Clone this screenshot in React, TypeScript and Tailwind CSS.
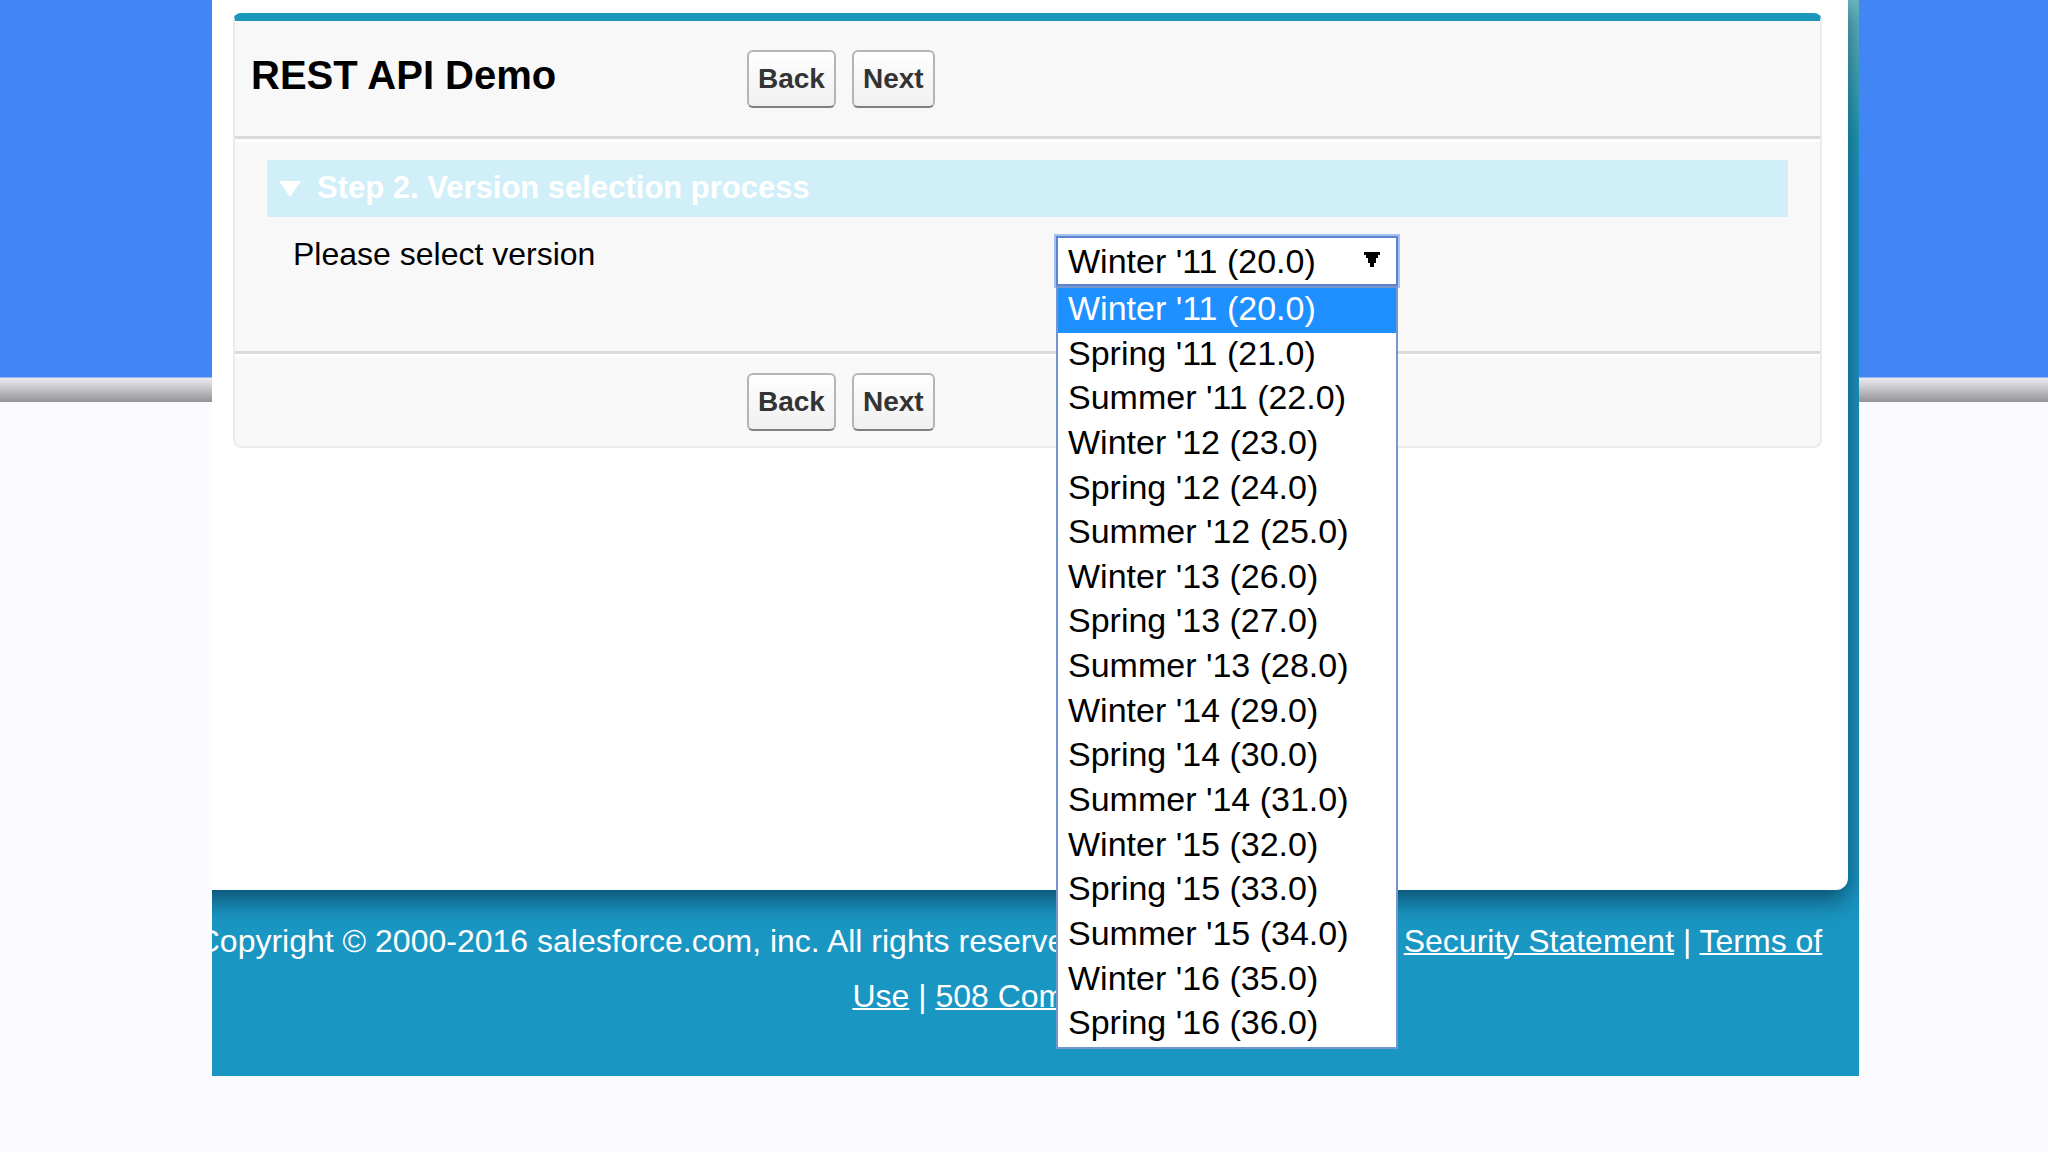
import { useState } from "react";
import clsx from "clsx";

const VERSIONS = [
  "Winter '11 (20.0)",
  "Spring '11 (21.0)",
  "Summer '11 (22.0)",
  "Winter '12 (23.0)",
  "Spring '12 (24.0)",
  "Summer '12 (25.0)",
  "Winter '13 (26.0)",
  "Spring '13 (27.0)",
  "Summer '13 (28.0)",
  "Winter '14 (29.0)",
  "Spring '14 (30.0)",
  "Summer '14 (31.0)",
  "Winter '15 (32.0)",
  "Spring '15 (33.0)",
  "Summer '15 (34.0)",
  "Winter '16 (35.0)",
  "Spring '16 (36.0)",
];

function WizardButtons() {
  const buttonClass =
    "h-[58px] rounded-md border-2 border-[#b5b5b5] border-b-[#7f7f7f] bg-linear-to-b from-white to-[#f0eff1] px-[9px] text-[28px] font-bold text-[#333]";

  return (
    <div className="flex gap-4">
      <button type="button" className={buttonClass}>
        Back
      </button>
      <button type="button" className={buttonClass}>
        Next
      </button>
    </div>
  );
}

function VersionSelect() {
  const [version, setVersion] = useState(VERSIONS[0]);

  return (
    <div className="relative w-[342px]">
      <select
        id="version"
        value={version}
        onChange={(e) => setVersion(e.target.value)}
        className="block h-[50px] w-full appearance-none border-2 border-[#5c83cc] bg-white pl-[10px] text-[34px] leading-[44px] text-black ring-2 ring-[#a5c1f3] outline-none"
      >
        {VERSIONS.map((name) => (
          <option key={name}>{name}</option>
        ))}
      </select>
      <svg
        viewBox="0 0 16 16"
        className="pointer-events-none absolute top-4 right-[18px] size-4"
      >
        <path d="M0 0h16v3h-2v3h-2v5h-2v4H6v-4H4V6H2V3H0z" fill="#000" />
      </svg>
      <ul
        role="listbox"
        aria-label="Version"
        className="absolute top-full left-0 z-10 flex h-[763px] w-full flex-col border-2 border-[#7595cf] bg-white text-[34px] leading-[40px] text-black"
      >
        {VERSIONS.map((name) => (
          <li
            key={name}
            role="option"
            aria-selected={name === version}
            onClick={() => setVersion(name)}
            className={clsx(
              "flex-1 pl-[10px] whitespace-nowrap",
              name === version && "bg-[#1e90ff] text-white",
            )}
          >
            {name}
          </li>
        ))}
      </ul>
    </div>
  );
}

function DemoPanel() {
  return (
    <form
      onSubmit={(e) => e.preventDefault()}
      className="rounded-lg border-2 border-t-8 border-[#ebebec] border-t-[#1a97b9] bg-[#f8f8f9]"
    >
      <div className="flex h-[118px] items-center border-b-3 border-[#dadadb] pl-4">
        <h1 className="w-[496px] pb-2 text-[40px] font-bold text-black">
          REST API Demo
        </h1>
        <WizardButtons />
      </div>

      <section className="h-[215px] border-b-3 border-[#dadadb] border-t-3 border-t-white px-8 pt-[18px]">
        <h2 className="flex h-[57px] items-center gap-4 bg-[#d1eff9] pl-3 text-[31px] font-bold text-white">
          <svg viewBox="0 0 22 16" className="h-4 w-[22px]">
            <path d="M0 0h22L11 16z" fill="#fff" />
          </svg>
          Step 2. Version selection process
        </h2>
        <div className="flex pt-[19px] pl-[26px]">
          <label
            htmlFor="version"
            className="w-[763px] text-[32px] leading-[36px] text-black"
          >
            Please select version
          </label>
          <VersionSelect />
        </div>
      </section>

      <div className="flex h-[92px] items-center border-t-3 border-white pl-[512px]">
        <WizardButtons />
      </div>
    </form>
  );
}

export default function App() {
  return (
    <div className="min-h-screen bg-[#fbfafc] bg-[linear-gradient(to_bottom,#4285f4_377px,#ececf0_378px,#959396_402px,transparent_402px)] pr-[189px] pl-[212px] font-['Liberation_Sans',Arial,sans-serif]">
      <div className="overflow-hidden bg-[#1a96c3] bg-[linear-gradient(to_bottom,#6ab8c3_0px,#1d9cb8_140px,#1a96c3_180px)]">
        <main className="relative -ml-8 mr-[11px] min-h-[890px] rounded-br-xl bg-white pt-[13px] pr-[26px] pl-[53px] shadow-[0_10px_24px_rgba(0,30,50,0.6)]">
          <DemoPanel />
        </main>
        <footer className="-ml-4 mr-9 h-[186px] pt-6 text-center text-[32px] leading-[55px] text-white">
          Copyright © 2000-2016 salesforce.com, inc. All rights reserved. |{" "}
          <a href="#privacy" className="underline decoration-2">
            Privacy Statement
          </a>{" "}
          |{" "}
          <a href="#security" className="underline decoration-2">
            Security Statement
          </a>{" "}
          |{" "}
          <a href="#terms" className="underline decoration-2">
            Terms of Use
          </a>{" "}
          |{" "}
          <a href="#compliance" className="underline decoration-2">
            508 Compliance
          </a>
        </footer>
      </div>
    </div>
  );
}
